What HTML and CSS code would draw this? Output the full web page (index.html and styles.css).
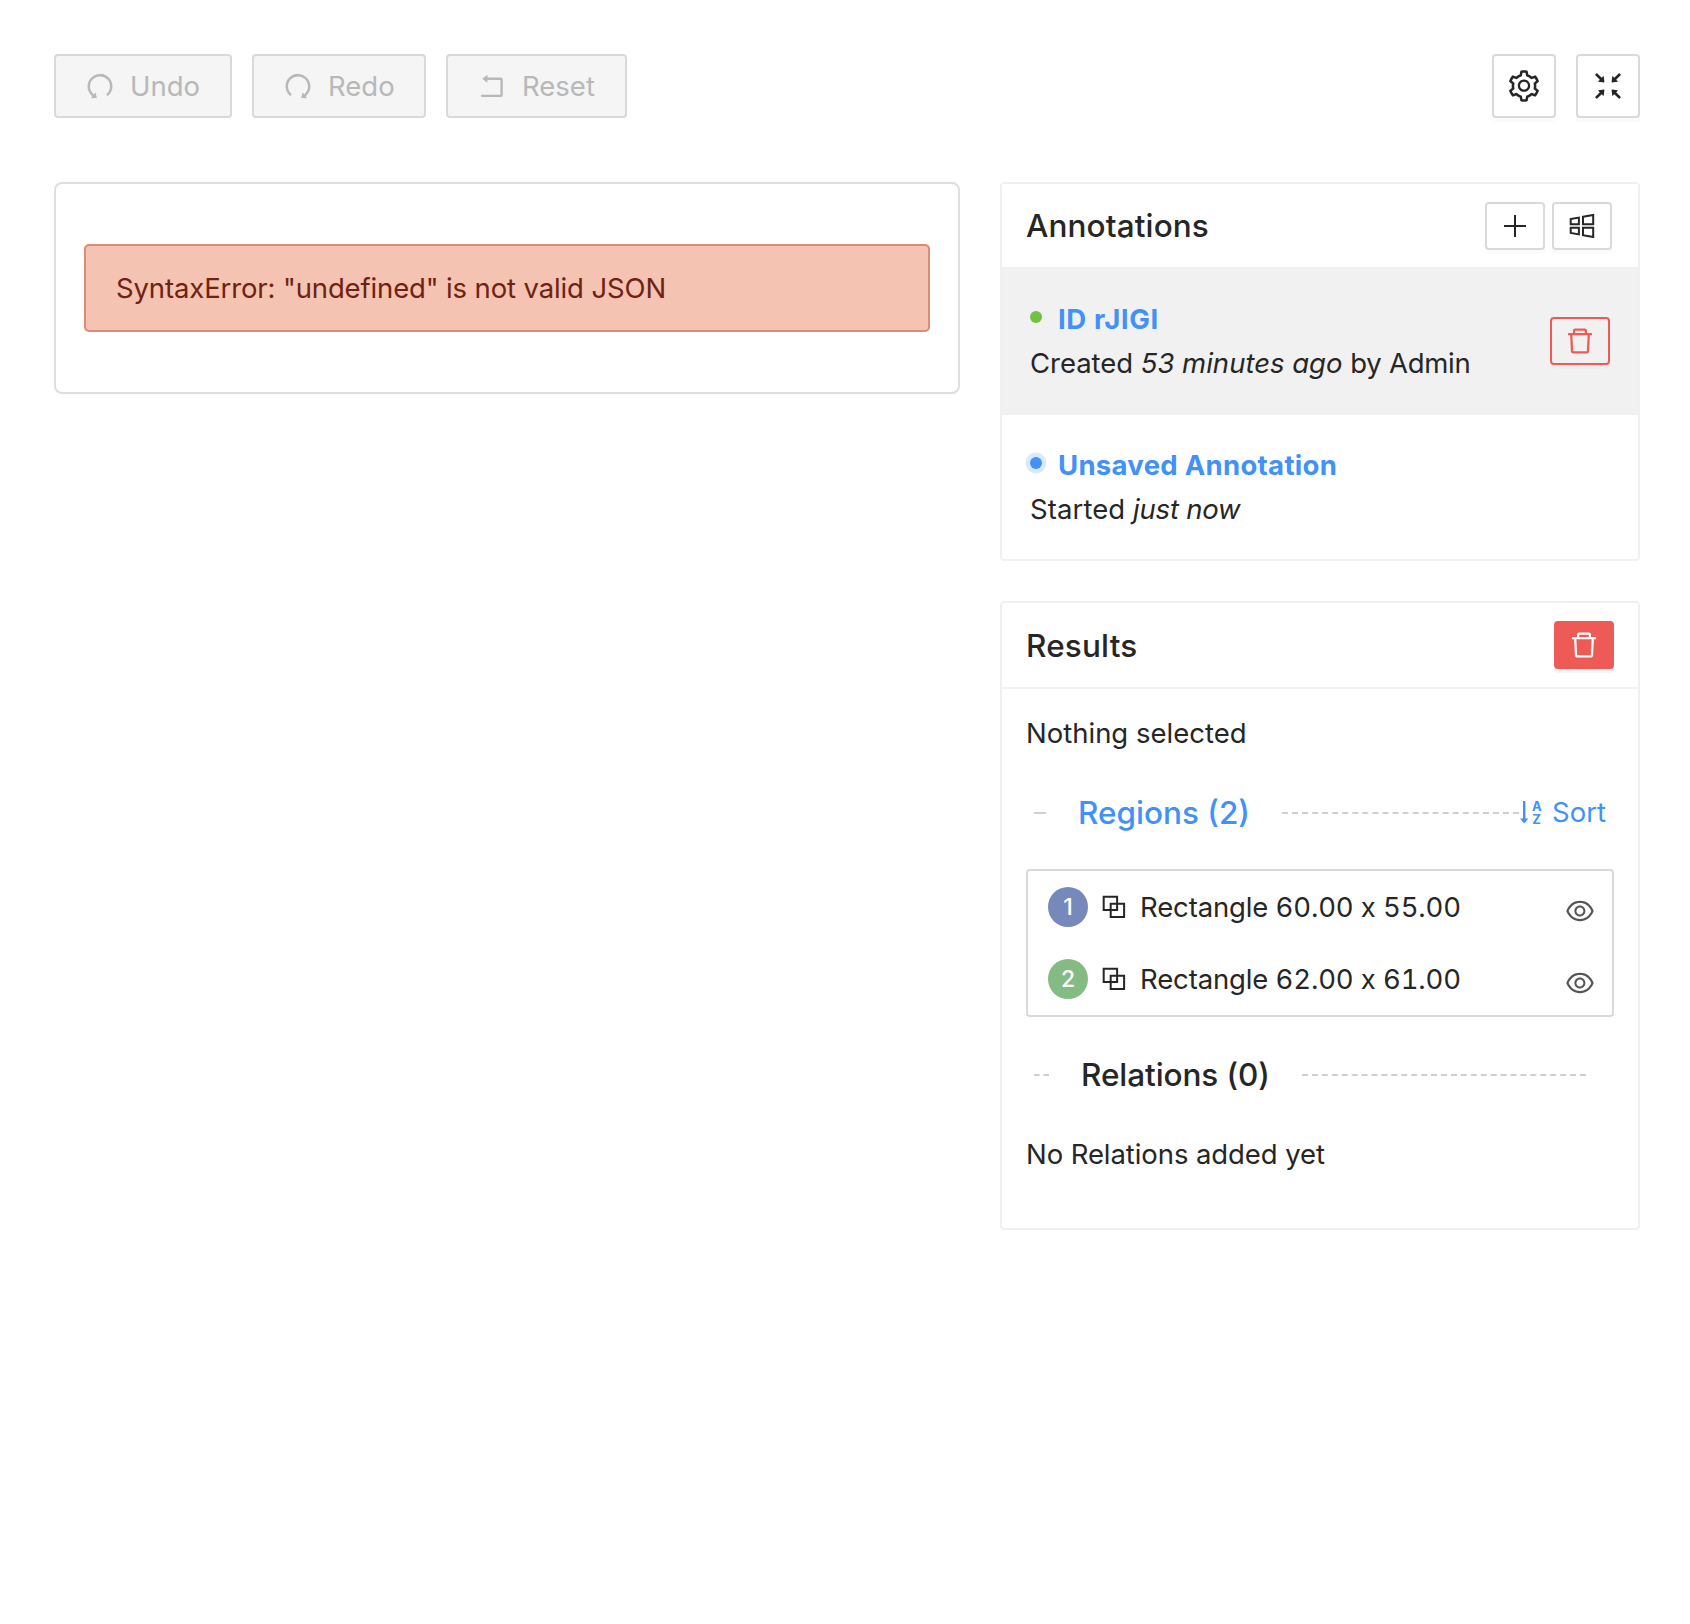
FILE: index.html
```html
<!DOCTYPE html>
<html lang="en">
<head>
<meta charset="utf-8">
<title>Annotation editor</title>
<link rel="stylesheet" href="styles.css">
</head>
<body>
<svg class="defs" width="0" height="0">
  <symbol id="undo" viewBox="0 0 1024 1024"><path d="M511.4 124C290.5 124.3 112 303 112 523.9c0 128 60.2 242 153.8 315.2l-37.5 48c-4.1 5.3-.3 13 6.3 12.9l167-.8c5.2 0 9-4.9 7.7-9.9L369.8 727a8 8 0 00-14.1-3L315 776.1c-10.2-8-20-16.7-29.3-26a318.64 318.64 0 01-68.6-101.7C200.4 609 192 567.1 192 523.9s8.4-85.1 25.1-124.5c16.1-38.1 39.2-72.3 68.6-101.7 29.4-29.4 63.6-52.5 101.7-68.6C426.9 212.4 468.8 204 512 204s85.1 8.4 124.5 25.1c38.1 16.1 72.3 39.2 101.7 68.6 29.4 29.4 52.5 63.6 68.6 101.7 16.7 39.4 25.1 81.3 25.1 124.5s-8.4 85.1-25.1 124.5a318.64 318.64 0 01-68.6 101.7c-7.5 7.5-15.3 14.5-23.4 21.2a7.93 7.93 0 00-1.2 11.1l39.4 50.5c2.8 3.5 7.9 4.1 11.4 1.3C854.5 760.8 912 649.1 912 523.9c0-221.1-179.4-400.2-400.6-399.9z"/></symbol>
  <symbol id="reset" viewBox="0 0 1024 1024"><path d="M793 242H366v-74c0-6.7-7.7-10.4-12.9-6.3l-142 112a8 8 0 000 12.6l142 112c5.2 4.1 12.9.4 12.9-6.3v-74h415v470H175c-4.4 0-8 3.6-8 8v60c0 4.4 3.6 8 8 8h618c35.3 0 64-28.7 64-64V306c0-35.3-28.7-64-64-64z"/></symbol>
  <symbol id="gear" viewBox="0 0 1024 1024"><path d="M924.8 625.7l-65.5-56c3.1-19 4.7-38.4 4.7-57.8s-1.6-38.8-4.7-57.8l65.5-56a32.03 32.03 0 009.3-35.2l-.9-2.6a443.74 443.74 0 00-79.7-137.9l-1.8-2.1a32.12 32.12 0 00-35.1-9.5l-81.3 28.9c-30-24.6-63.5-44-99.7-57.6l-15.7-85a32.05 32.05 0 00-25.8-25.7l-2.7-.5c-52.1-9.4-106.9-9.4-159 0l-2.7.5a32.05 32.05 0 00-25.8 25.7l-15.8 85.4a351.86 351.86 0 00-99 57.4l-81.9-29.1a32 32 0 00-35.1 9.5l-1.8 2.1a446.02 446.02 0 00-79.7 137.9l-.9 2.6c-4.5 12.5-.8 26.5 9.3 35.2l66.3 56.6c-3.1 18.8-4.6 38-4.6 57.1 0 19.2 1.5 38.4 4.6 57.1L99 625.5a32.03 32.03 0 00-9.3 35.2l.9 2.6c18.1 50.4 44.9 96.9 79.7 137.9l1.8 2.1a32.12 32.12 0 0035.1 9.5l81.9-29.1c29.8 24.5 63.1 43.9 99 57.4l15.8 85.4a32.05 32.05 0 0025.8 25.7l2.7.5a449.4 449.4 0 00159 0l2.7-.5a32.05 32.05 0 0025.8-25.7l15.7-85a350 350 0 0099.7-57.6l81.3 28.9a32 32 0 0035.1-9.5l1.8-2.1c34.8-41.1 61.6-87.5 79.7-137.9l.9-2.6c4.5-12.3.8-26.3-9.3-35zM788.3 465.9c2.5 15.1 3.8 30.6 3.8 46.1s-1.3 31-3.8 46.1l-6.6 40.1 74.7 63.9a370.03 370.03 0 01-42.6 73.6L721 702.8l-31.4 25.8c-23.9 19.6-50.5 35-79.3 45.8l-38.1 14.3-17.9 97a377.5 377.5 0 01-85 0l-17.9-97.2-37.8-14.5c-28.5-10.8-55-26.2-78.7-45.7l-31.4-25.9-93.4 33.2c-17-22.9-31.2-47.6-42.6-73.6l75.5-64.5-6.5-40c-2.4-14.9-3.7-30.3-3.7-45.5 0-15.3 1.2-30.6 3.7-45.5l6.5-40-75.5-64.5c11.3-26.1 25.6-50.7 42.6-73.6l93.4 33.2 31.4-25.9c23.7-19.5 50.2-34.9 78.7-45.7l37.9-14.3 17.9-97.2c28.1-3.2 56.8-3.2 85 0l17.9 97 38.1 14.3c28.7 10.8 55.4 26.2 79.3 45.8l31.4 25.8 92.8-32.9c17 22.9 31.2 47.6 42.6 73.6L781.8 426l6.5 39.9zM512 326c-97.2 0-176 78.8-176 176s78.8 176 176 176 176-78.8 176-176-78.8-176-176-176zm79.2 255.2A111.6 111.6 0 01512 614c-29.9 0-58-11.7-79.2-32.8A111.6 111.6 0 01400 502c0-29.9 11.7-58 32.8-79.2C454 401.6 482.1 390 512 390c29.9 0 58 11.6 79.2 32.8A111.6 111.6 0 01624 502c0 29.9-11.7 58-32.8 79.2z"/></symbol>
  <symbol id="shrink" viewBox="0 0 1024 1024"><path d="M391 240.9c-.8-6.6-8.9-9.4-13.6-4.7l-43.7 43.7L200 146.3a8.03 8.03 0 00-11.3 0l-42.4 42.3a8.03 8.03 0 000 11.3L280 333.6l-43.9 43.9a8.01 8.01 0 004.7 13.6L401 410c5.1.6 9.5-3.7 8.9-8.9L391 240.9zm10.1 373.2L240.8 633c-6.6.8-9.4 8.9-4.7 13.6l43.9 43.9L146.3 824a8.03 8.03 0 000 11.3l42.4 42.3c3.1 3.1 8.2 3.1 11.3 0L333.7 744l43.7 43.7A8.01 8.01 0 00391 783l18.9-160.1c.6-5.1-3.7-9.4-8.8-8.8zm221.8-204.2L783.2 391c6.6-.8 9.4-8.9 4.7-13.6L744 333.6 877.7 200c3.1-3.1 3.1-8.2 0-11.3l-42.4-42.3a8.03 8.03 0 00-11.3 0L690.3 279.9l-43.7-43.7a8.01 8.01 0 00-13.6 4.7L614.1 401c-.6 5.2 3.7 9.5 8.8 8.9zM744 690.4l43.9-43.9a8.01 8.01 0 00-4.7-13.6L623 614c-5.1-.6-9.5 3.7-8.9 8.9L633 783.1c.8 6.6 8.9 9.4 13.6 4.7l43.7-43.7L824 877.7c3.1 3.1 8.2 3.1 11.3 0l42.4-42.3c3.1-3.1 3.1-8.2 0-11.3L744 690.4z"/></symbol>
  <symbol id="trash" viewBox="0 0 1024 1024"><path d="M360 184h-8c4.4 0 8-3.6 8-8v8h304v-8c0 4.4 3.6 8 8 8h-8v72h72v-80c0-35.3-28.7-64-64-64H352c-35.3 0-64 28.7-64 64v80h72v-72zm504 72H160c-17.7 0-32 14.3-32 32v32c0 4.4 3.6 8 8 8h60.4l24.7 523c1.6 34.1 29.8 61 63.9 61h454c34.2 0 62.3-26.8 63.9-61l24.7-523H888c4.4 0 8-3.6 8-8v-32c0-17.7-14.3-32-32-32zM731.3 840H292.7l-24.2-512h487l-24.2 512z"/></symbol>
  <symbol id="eye" viewBox="0 0 1024 1024"><path d="M942.2 486.2C847.4 286.5 704.1 186 512 186c-192.2 0-335.4 100.5-430.2 300.3a60.3 60.3 0 000 51.5C176.6 737.5 319.9 838 512 838c192.2 0 335.4-100.5 430.2-300.3 7.7-16.2 7.7-35 0-51.5zM512 766c-161.3 0-279.4-81.8-362.7-254C232.6 339.8 350.7 258 512 258c161.3 0 279.4 81.8 362.7 254C791.5 684.2 673.4 766 512 766zm-4-430c-97.2 0-176 78.8-176 176s78.8 176 176 176 176-78.8 176-176-78.8-176-176-176zm0 288c-61.9 0-112-50.1-112-112s50.1-112 112-112 112 50.1 112 112-50.1 112-112 112z"/></symbol>
  <symbol id="panes" viewBox="0 0 32 32"><path fill="none" stroke="currentColor" stroke-width="2" d="M4.7 9.1l8.2-1.5v6.7H4.7zM17 6.8l10.2-1.9v9.4H17zM4.7 17.7h8.2v6.7l-8.2-1.5zM17 17.7h10.2v9.4L17 25.2z"/></symbol>
  <symbol id="rects" viewBox="0 0 24 24"><path fill="none" stroke="currentColor" stroke-width="2" d="M1.7 1.7h13.4v13.4H1.7zM8.7 8.7h13.4v13.4H8.7z"/></symbol>
</svg>

<div class="editor">
  <div class="toolbar">
    <button class="btn btn-disabled undo"><svg class="icon"><use href="#undo"/></svg><span>Undo</span></button>
    <button class="btn btn-disabled redo"><svg class="icon flip"><use href="#undo"/></svg><span>Redo</span></button>
    <button class="btn btn-disabled reset"><svg class="icon"><use href="#reset"/></svg><span>Reset</span></button>
    <div class="spacer"></div>
    <button class="btn btn-square"><svg class="icon-lg"><use href="#gear"/></svg></button>
    <button class="btn btn-square"><svg class="icon-lg"><use href="#shrink"/></svg></button>
  </div>

  <div class="columns">
    <div class="task">
      <div class="error">SyntaxError: "undefined" is not valid JSON</div>
    </div>

    <div class="side">
      <section class="card">
        <header class="card-head annotations-head">
          <h2 class="title-annotations">Annotations</h2>
          <div class="actions">
            <button class="btn btn-small"><svg class="icon" viewBox="0 0 32 32"><path d="M15 5h2v10h10v2H17v10h-2V17H5v-2h10z"/></svg></button>
            <button class="btn btn-small"><svg class="icon"><use href="#panes"/></svg></button>
          </div>
        </header>
        <div class="entry selected">
          <div>
            <div class="entry-name"><i class="dot green"></i><b class="id">ID rJlGI</b></div>
            <div class="entry-info"><span class="created">Created</span> <em class="ago">53 minutes ago</em> <span class="author">by Admin</span></div>
          </div>
          <button class="btn btn-small btn-danger"><svg class="icon"><use href="#trash"/></svg></button>
        </div>
        <div class="entry">
          <div>
            <div class="entry-name"><i class="dot blue"></i><b class="unsaved">Unsaved Annotation</b></div>
            <div class="entry-info"><span class="started">Started</span> <em class="now">just now</em></div>
          </div>
        </div>
      </section>

      <section class="card">
        <header class="card-head">
          <h2 class="title-results">Results</h2>
          <button class="btn btn-small btn-danger-solid"><svg class="icon"><use href="#trash"/></svg></button>
        </header>
        <div class="card-body">
          <p class="nothing">Nothing selected</p>
          <div class="divider regions">
            <span class="dash dash-left"></span>
            <h3>Regions (2)</h3>
            <span class="dash dash-right"></span>
            <a class="sort"><svg class="sort-icon" viewBox="0 0 22 26"><path d="M3 1h2.4v17.4h3L4.2 23.6 0 18.4h3z"/><text x="12" y="10.6">A</text><text x="12.3" y="24.4">Z</text></svg>Sort</a>
          </div>
          <ul class="list">
            <li><span class="badge indigo">1</span><svg class="rects"><use href="#rects"/></svg><span class="name">Rectangle 60.00 x 55.00</span><svg class="icon eye"><use href="#eye"/></svg></li>
            <li><span class="badge leaf">2</span><svg class="rects"><use href="#rects"/></svg><span class="name">Rectangle 62.00 x 61.00</span><svg class="icon eye"><use href="#eye"/></svg></li>
          </ul>
          <div class="divider relations">
            <span class="dash dash-left"></span>
            <h3>Relations (0)</h3>
            <span class="dash dash-right"></span>
          </div>
          <p class="none">No Relations added yet</p>
        </div>
      </section>
    </div>
  </div>
</div>
</body>
</html>
```
FILE: styles.css
```css
* { box-sizing: border-box; }
body {
  margin: 0;
  background: #fff;
  color: #262626;
  font: 400 27.5px/44px Inter, "Liberation Sans", sans-serif;
}
h2, h3, p, ul { margin: 0; padding: 0; }
svg { display: block; flex: none; fill: currentColor; }
.defs { position: absolute; }
.icon { width: 32px; height: 32px; }
.icon-lg { width: 36px; height: 36px; }
.flip { transform: scaleX(-1); }

.editor { padding: 54px 50px 0 54px; }
.toolbar { display: flex; gap: 20px; height: 64px; }
.spacer { flex: 1; }

.btn {
  display: flex;
  align-items: center;
  justify-content: center;
  flex: none;
  padding: 0;
  border: 2px solid #d9d9d9;
  border-radius: 4px;
  background: #fff;
  color: #262626;
  font: inherit;
  box-shadow: 0 4px 0 rgba(0, 0, 0, .016);
}
.btn-disabled {
  justify-content: flex-start;
  gap: 14px;
  padding-left: 28px;
  background: #f5f5f5;
  color: #b8b8b8;
  box-shadow: none;
}
.undo { width: 178px; }
.redo { width: 174px; }
.reset { width: 181px; }
.btn-square { width: 64px; height: 64px; }
.btn-small { width: 60px; height: 48px; }
.btn-danger { border-color: #ee5a55; background: transparent; color: #ee5a55; }
.btn-danger-solid { border-color: #ee5a55; background: #ee5a55; color: #fff; box-shadow: 0 4px 0 rgba(0, 0, 0, .045); }

.columns { display: grid; grid-template-columns: 906px 640px; gap: 40px; align-items: start; margin-top: 64px; }
.task { padding: 60px 28px; border: 2px solid #dedede; border-radius: 8px; }
.error {
  padding: 20px 30px;
  border: 2px solid #dc8c74;
  border-radius: 5px;
  background: #f4c3b2;
  color: #6f2211;
  letter-spacing: -.13px;
}

.side { display: flex; flex-direction: column; gap: 40px; }
.card { border: 2px solid #f0f0f0; border-radius: 4px; }
.card-head {
  display: flex;
  align-items: center;
  justify-content: space-between;
  height: 86px;
  padding: 0 24px;
  border-bottom: 2px solid #f0f0f0;
}
.card-head h2 { padding-top: 1px; font-size: 31.5px; font-weight: 500; }
.annotations-head { height: 85px; padding-right: 26px; }
.title-annotations { letter-spacing: .12px; }
.title-results { letter-spacing: .18px; }
.actions { display: flex; gap: 7px; }

.entry { display: flex; align-items: center; justify-content: space-between; height: 144px; padding: 0 28px; }
.selected { height: 146px; border-bottom: 2px solid #f0f0f0; background: #f1f1f1; }
.entry-name { display: flex; align-items: center; gap: 16px; color: #4191f8; }
.id { letter-spacing: .65px; }
.unsaved { letter-spacing: .3px; }
.created { letter-spacing: -.05px; }
.started { letter-spacing: .1px; }
.now { letter-spacing: -.2px; }
.author { letter-spacing: -.25px; }
.dot { width: 12px; height: 12px; border-radius: 50%; margin-bottom: 4px; }
.green { background: #72c140; }
.blue { background: #4191f8; box-shadow: 0 0 0 4.5px #d9e9fe; }

.card-body { padding: 22px 24px 52px; }
.divider { display: flex; align-items: center; height: 48px; margin-top: 34px; padding-left: 8px; }
.divider h3 { font-size: 31.5px; font-weight: 500; white-space: nowrap; }
.dash { border-top: 2px dashed #cfcfcf; }
.dash-left { width: 12px; }
.dash-right { flex: 1; }
.regions h3 { margin: 0 32px 0 32px; color: #4191f8; }
.relations { padding-right: 28px; }
.relations .dash-left { width: 15px; }
.relations h3 { margin: 0 32px 0 32px; letter-spacing: -.08px; }
.sort { display: flex; align-items: center; gap: 10px; margin-top: -2px; padding-right: 8px; color: #4191f8; }
.sort-icon { width: 22px; height: 26px; margin: 2px 0 0 1px; overflow: visible; }
.sort-icon text { font: 700 13px Inter, sans-serif; }

.list { margin-top: 32px; border: 2px solid #d9d9d9; border-radius: 4px; list-style: none; }
.list li { display: flex; align-items: center; height: 72px; padding: 0 16px 0 20px; }
.badge { width: 40px; height: 40px; border-radius: 50%; color: #fff; font-size: 23px; font-weight: 500; line-height: 40px; text-align: center; }
.indigo { background: #7689ba; }
.leaf { background: #84bb82; }
.rects { width: 24px; height: 24px; margin: 0 14px; }
.name { flex: 1; letter-spacing: -.13px; font-variant-numeric: tabular-nums; }
.eye { margin-top: 8px; color: #555; }
.none { margin-top: 33px; letter-spacing: -.08px; }
```
